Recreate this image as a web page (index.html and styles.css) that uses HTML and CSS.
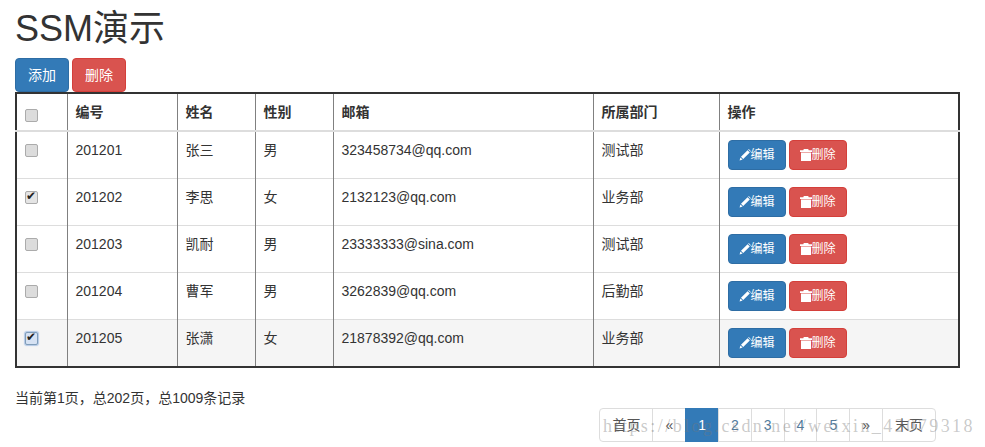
FILE: index.html
```html
<!DOCTYPE html>
<html lang="en">
<head>
    <meta charset="UTF-8">
    <title>SSM演示</title>
    <link rel="stylesheet" href="styles.css">
</head>
<body>
    <div class="container">
        <h1 class="title">SSM演示</h1>

        <div class="toolbar">
            <button class="btn btn-primary">添加</button>
            <button class="btn btn-danger">删除</button>
        </div>

        <table class="emp-table">
            <thead>
                <tr>
                    <th class="col-check"><input type="checkbox" class="check"></th>
                    <th class="col-id">编号</th>
                    <th class="col-name">姓名</th>
                    <th class="col-gender">性别</th>
                    <th class="col-email">邮箱</th>
                    <th class="col-dept">所属部门</th>
                    <th>操作</th>
                </tr>
            </thead>
            <tbody>
                <tr>
                    <td><input type="checkbox" class="check"></td>
                    <td>201201</td>
                    <td>张三</td>
                    <td>男</td>
                    <td>323458734@qq.com</td>
                    <td>测试部</td>
                    <td>
                        <div class="actions">
                            <button class="btn btn-sm btn-primary"><svg class="icon" viewBox="0 0 12 12"><path d="M8.6 1.2l2.2 2.2-6.6 6.6-2.2-2.2zM1.4 8.4l2.2 2.2-3 .8z"/><path d="M9.2.6l.6-.5 2.1 2.1-.5.6z"/></svg>编辑</button>
                            <button class="btn btn-sm btn-danger"><svg class="icon" viewBox="0 0 12 12"><path d="M3.8 0h4.4l.5 1.2H12V3H0V1.2h3.3zM1 3.6h10V12H1z"/></svg>删除</button>
                        </div>
                    </td>
                </tr>
                <tr>
                    <td><input type="checkbox" class="check" checked></td>
                    <td>201202</td>
                    <td>李思</td>
                    <td>女</td>
                    <td>2132123@qq.com</td>
                    <td>业务部</td>
                    <td>
                        <div class="actions">
                            <button class="btn btn-sm btn-primary"><svg class="icon" viewBox="0 0 12 12"><path d="M8.6 1.2l2.2 2.2-6.6 6.6-2.2-2.2zM1.4 8.4l2.2 2.2-3 .8z"/><path d="M9.2.6l.6-.5 2.1 2.1-.5.6z"/></svg>编辑</button>
                            <button class="btn btn-sm btn-danger"><svg class="icon" viewBox="0 0 12 12"><path d="M3.8 0h4.4l.5 1.2H12V3H0V1.2h3.3zM1 3.6h10V12H1z"/></svg>删除</button>
                        </div>
                    </td>
                </tr>
                <tr>
                    <td><input type="checkbox" class="check"></td>
                    <td>201203</td>
                    <td>凯耐</td>
                    <td>男</td>
                    <td>23333333@sina.com</td>
                    <td>测试部</td>
                    <td>
                        <div class="actions">
                            <button class="btn btn-sm btn-primary"><svg class="icon" viewBox="0 0 12 12"><path d="M8.6 1.2l2.2 2.2-6.6 6.6-2.2-2.2zM1.4 8.4l2.2 2.2-3 .8z"/><path d="M9.2.6l.6-.5 2.1 2.1-.5.6z"/></svg>编辑</button>
                            <button class="btn btn-sm btn-danger"><svg class="icon" viewBox="0 0 12 12"><path d="M3.8 0h4.4l.5 1.2H12V3H0V1.2h3.3zM1 3.6h10V12H1z"/></svg>删除</button>
                        </div>
                    </td>
                </tr>
                <tr>
                    <td><input type="checkbox" class="check"></td>
                    <td>201204</td>
                    <td>曹军</td>
                    <td>男</td>
                    <td>3262839@qq.com</td>
                    <td>后勤部</td>
                    <td>
                        <div class="actions">
                            <button class="btn btn-sm btn-primary"><svg class="icon" viewBox="0 0 12 12"><path d="M8.6 1.2l2.2 2.2-6.6 6.6-2.2-2.2zM1.4 8.4l2.2 2.2-3 .8z"/><path d="M9.2.6l.6-.5 2.1 2.1-.5.6z"/></svg>编辑</button>
                            <button class="btn btn-sm btn-danger"><svg class="icon" viewBox="0 0 12 12"><path d="M3.8 0h4.4l.5 1.2H12V3H0V1.2h3.3zM1 3.6h10V12H1z"/></svg>删除</button>
                        </div>
                    </td>
                </tr>
                <tr class="row-hover">
                    <td><input type="checkbox" class="check check-focus" checked></td>
                    <td>201205</td>
                    <td>张潇</td>
                    <td>女</td>
                    <td>21878392@qq.com</td>
                    <td>业务部</td>
                    <td>
                        <div class="actions">
                            <button class="btn btn-sm btn-primary"><svg class="icon" viewBox="0 0 12 12"><path d="M8.6 1.2l2.2 2.2-6.6 6.6-2.2-2.2zM1.4 8.4l2.2 2.2-3 .8z"/><path d="M9.2.6l.6-.5 2.1 2.1-.5.6z"/></svg>编辑</button>
                            <button class="btn btn-sm btn-danger"><svg class="icon" viewBox="0 0 12 12"><path d="M3.8 0h4.4l.5 1.2H12V3H0V1.2h3.3zM1 3.6h10V12H1z"/></svg>删除</button>
                        </div>
                    </td>
                </tr>
            </tbody>
        </table>

        <p class="page-info">当前第1页，总202页，总1009条记录</p>

        <ul class="pagination">
            <li><a href="#">首页</a></li>
            <li><a href="#">«</a></li>
            <li class="active"><a href="#">1</a></li>
            <li><a href="#" class="page-num">2</a></li>
            <li><a href="#" class="page-num">3</a></li>
            <li><a href="#" class="page-num">4</a></li>
            <li><a href="#" class="page-num">5</a></li>
            <li><a href="#">»</a></li>
            <li><a href="#">末页</a></li>
        </ul>
    </div>

    <!-- image host watermark, lies over the pagination -->
    <div class="watermark">https://blog.csdn.net/weixin_42079318</div>
</body>
</html>
```

FILE: styles.css
```css
* {
    box-sizing: border-box;
}

body {
    margin: 0;
    font-family: "Liberation Sans", "Noto Sans CJK SC", sans-serif;
    font-size: 14px;
    line-height: 20px;
    color: #333;
    background: #fff;
}

.container {
    width: 960px;
    padding: 9px 0 0 15px;
}

.title {
    margin: 0 0 9px;
    font-size: 36px;
    font-weight: 400;
    line-height: 40px;
}

.toolbar {
    display: flex;
    gap: 3px;
}

.btn {
    padding: 6px 12px;
    font-family: inherit;
    font-size: 14px;
    line-height: 20px;
    color: #fff;
    border: 1px solid transparent;
    border-radius: 4px;
}

.btn-sm {
    display: flex;
    align-items: center;
    padding: 5px 10px;
    font-size: 12px;
    line-height: 18px;
}

.btn-primary {
    background: #337ab7;
    border-color: #2e6da4;
}

.btn-danger {
    background: #d9534f;
    border-color: #d43f3a;
}

.icon {
    width: 12px;
    height: 12px;
    fill: #fff;
}

/* Table */
.emp-table {
    width: 945px;
    table-layout: fixed;
    border-collapse: collapse;
    border: 2px solid #333;
}

.emp-table th,
.emp-table td {
    padding: 8px;
    text-align: left;
    vertical-align: top;
    border-left: 1px solid #808080;
    border-right: 1px solid #808080;
}

.emp-table th {
    border-bottom: 2px solid #ddd;
}

.emp-table td {
    border-top: 1px solid #ddd;
}

.emp-table tbody tr:first-child td {
    border-top: 0;
}

.col-check { width: 51px; }
.col-id { width: 110px; }
.col-name { width: 78px; }
.col-gender { width: 78px; }
.col-email { width: 260px; }
.col-dept { width: 126px; }

.row-hover td {
    background: #f5f5f5;
}

.actions {
    display: flex;
    gap: 3px;
}

/* Checkboxes, drawn to look like the old browser ones */
.check {
    appearance: none;
    display: block;
    position: relative;
    width: 13px;
    height: 13px;
    margin: 4px 0 0;
    background: #dcdcdc;
    border: 1px solid #ababab;
    border-radius: 2px;
}

th .check {
    margin-top: 7px;
}

.check:checked {
    background: #e4e4e4;
}

.check:checked::after {
    content: "✔";
    position: absolute;
    left: 0;
    top: -3px;
    font-family: "DejaVu Sans", sans-serif;
    font-size: 12px;
    color: #222;
}

.check-focus {
    background: #c3d3ea;
    border-color: #7f9db9;
    box-shadow: 0 0 1px 1px #b3c8e6;
}

.check-focus:checked {
    background: #d6e2f3;
}

/* Footer */
.page-info {
    margin: 0;
    padding-top: 20px;
}

.pagination {
    display: flex;
    justify-content: flex-end;
    width: 921px;
    margin: 0;
    padding: 0;
    list-style: none;
}

.pagination a {
    display: block;
    margin-left: -1px;
    padding: 6px 12px;
    color: #555;
    text-decoration: none;
    background: #fff;
    border: 1px solid #ddd;
}

.pagination .page-num {
    color: #527a9c;
}

.pagination li:first-child a {
    margin-left: 0;
    border-radius: 4px 0 0 4px;
}

.pagination li:last-child a {
    border-radius: 0 4px 4px 0;
}

.pagination .active a {
    color: #fff;
    background: #337ab7;
    border-color: #337ab7;
}

.watermark {
    position: absolute;
    left: 603px;
    top: 415px;
    font-family: "Liberation Serif", serif;
    font-size: 18px;
    letter-spacing: 2.46px;
    line-height: 22px;
    white-space: nowrap;
    color: rgba(120, 120, 120, 0.4);
}
```
